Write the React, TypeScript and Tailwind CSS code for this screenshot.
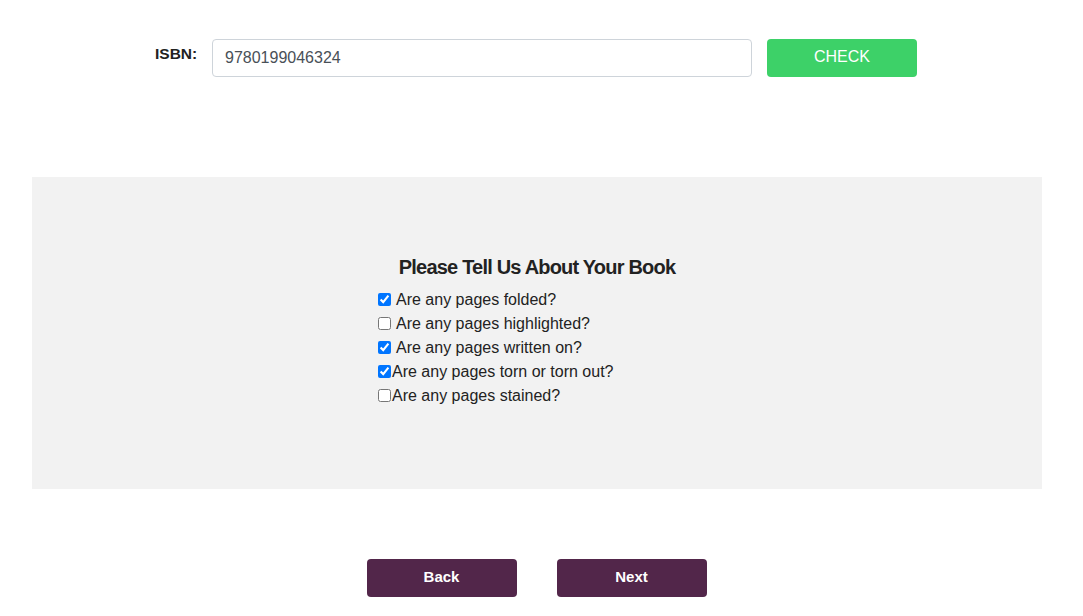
import React, { useState } from "react";

const items = [
  { label: "Are any pages folded?", checked: true, space: true },
  { label: "Are any pages highlighted?", checked: false, space: true },
  { label: "Are any pages written on?", checked: true, space: true },
  { label: "Are any pages torn or torn out?", checked: true, space: false },
  { label: "Are any pages stained?", checked: false, space: false },
];

export default function App() {
  const [vals, setVals] = useState(items.map((i) => i.checked));
  return (
    <div className="w-[1083px] h-[616px] bg-white text-[#222] font-['Liberation_Sans',Arial,sans-serif] overflow-hidden">
      <div className="flex items-start pt-[39px] pl-[155px]">
        <label className="text-[15.5px] font-bold mt-[3px] w-[57px] text-[#222]">ISBN:</label>
        <input
          className="w-[540px] h-[38px] border border-[#ced4da] rounded-[4px] px-[12px] text-[16px] text-[#495057] outline-none"
          defaultValue="9780199046324"
        />
        <button className="ml-[15px] w-[150px] h-[38px] bg-[#3dd168] rounded-[4px] text-white text-[16px] pb-[2px]">
          CHECK
        </button>
      </div>
      <div className="mt-[100px] ml-[32px] w-[1010px] h-[312px] bg-[#f2f2f2] pt-[78px]">
        <h2 className="text-center text-[20px] font-bold tracking-[-0.8px] text-[#222] leading-[24px]">
          Please Tell Us About Your Book
        </h2>
        <div className="ml-[346px] mt-[9px] flex flex-col">
          {items.map((it, i) => (
            <label key={i} className="flex items-center h-[24px] text-[16px] text-[#222]">
              <input
                type="checkbox"
                checked={vals[i]}
                onChange={() => setVals(vals.map((v, j) => (j === i ? !v : v)))}
                className="w-[13px] h-[13px] m-0 mt-[-2px] accent-[#0075ff]"
              />
              <span className={it.space ? "ml-[5px]" : "ml-[1px]"}>{it.label}</span>
            </label>
          ))}
        </div>
      </div>
      <div className="flex justify-center gap-[40px] mt-[70px] pr-[10px]">
        <button className="w-[150px] h-[38px] bg-[#52264a] rounded-[4px] text-white text-[15px] font-bold pb-[2px]">
          Back
        </button>
        <button className="w-[150px] h-[38px] bg-[#52264a] rounded-[4px] text-white text-[15px] font-bold pb-[2px]">
          Next
        </button>
      </div>
    </div>
  );
}
